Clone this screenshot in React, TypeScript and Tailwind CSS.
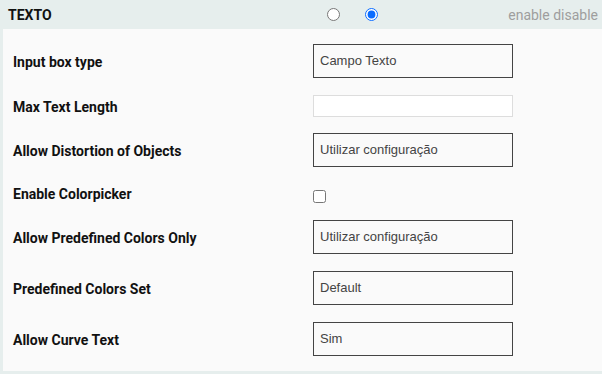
import { useState } from 'react';

const rows = [
  { label: 'Input box type', kind: 'box', value: 'Campo Texto', cls: 'mt-[15px] h-[34px]' },
  { label: 'Max Text Length', kind: 'text', value: '', cls: 'mt-[17px] h-[22px]' },
  { label: 'Allow Distortion of Objects', kind: 'box', value: 'Utilizar configuração', cls: 'mt-[16px] h-[34px]' },
  { label: 'Enable Colorpicker', kind: 'check', value: '', cls: 'mt-[17px] h-[19px]' },
  { label: 'Allow Predefined Colors Only', kind: 'box', value: 'Utilizar configuração', cls: 'mt-[17px] h-[34px]' },
  { label: 'Predefined Colors Set', kind: 'box', value: 'Default', cls: 'mt-[17px] h-[34px]' },
  { label: 'Allow Curve Text', kind: 'box', value: 'Sim', cls: 'mt-[17px] h-[34px]' },
];

export default function App() {
  const [enabled, setEnabled] = useState(false);

  return (
    <div className="w-[602px] h-[374px] bg-[#e6eeed] font-['Roboto',sans-serif] flex flex-col">
      {/* cabecera */}
      <div className="h-[29px] flex items-center pl-2 pr-1">
        <span className="w-[319px] text-[14px] font-bold text-[#111] leading-none">TEXTO</span>
        <input
          type="radio"
          name="texto"
          checked={enabled}
          onChange={() => setEnabled(true)}
          className="w-[13px] h-[13px] m-0"
        />
        <span className="w-[25px]" />
        <input
          type="radio"
          name="texto"
          checked={!enabled}
          onChange={() => setEnabled(false)}
          className="w-[13px] h-[13px] m-0 accent-[#0a6cff]"
        />
        <span className="ml-auto text-[14px] text-[#9e9e9e] leading-none">enable disable</span>
      </div>

      {/* panel */}
      <div className="ml-[3px] h-[342px] bg-[#fafafa] flex flex-col">
        {rows.map((r) => (
          <div key={r.label} className={`flex items-center ${r.cls}`}>
            <span className="w-[310px] pl-[10px] pt-[2px] text-[14px] font-bold text-[#111]">{r.label}</span>
            {r.kind === 'box' && (
              <div className="w-[200px] h-[34px] border border-[#444] flex items-center px-[6px] font-['Liberation_Sans',sans-serif] text-[13px] text-[#444]">
                {r.value}
              </div>
            )}
            {r.kind === 'text' && (
              <input type="text" className="w-[200px] h-[22px] border border-[#ddd] bg-white outline-none" />
            )}
            {r.kind === 'check' && (
              <input type="checkbox" className="w-[13px] h-[13px] m-0 self-end" />
            )}
          </div>
        ))}
      </div>
    </div>
  );
}
